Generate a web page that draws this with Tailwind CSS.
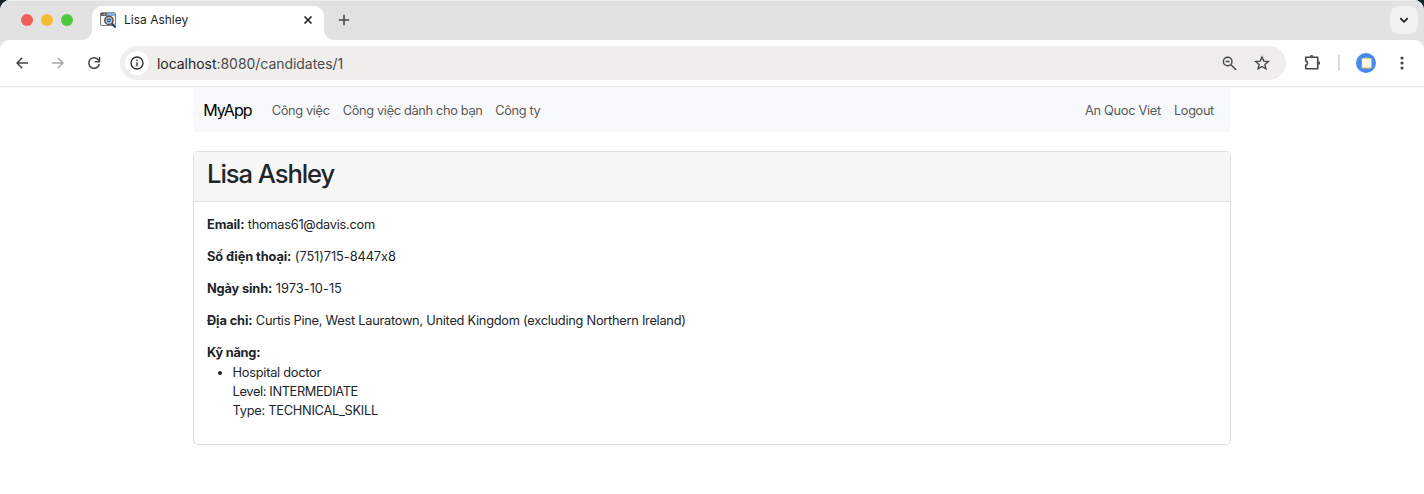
<!DOCTYPE html>
<html lang="vi">
<head>
<meta charset="utf-8">
<title>Lisa Ashley</title>
<script src="https://cdn.jsdelivr.net/npm/@tailwindcss/browser@4"></script>
</head>
<body class="bg-[#17232a] font-['Inter','Noto_Sans',sans-serif] text-[12.8px] leading-[19.2px] text-[#212529]">
<div class="flex h-[494px] w-[1424px] flex-col overflow-hidden rounded-t-[10px] bg-white whitespace-nowrap">
  <header class="shrink-0 bg-[#e2e2e2]">
    <div class="flex h-10 items-start border-t border-[#efefef]">
      <div class="flex w-[92px] gap-2 pt-[13px] pl-[21px]">
        <span class="size-3 rounded-full bg-[#ee5f57]"></span>
        <span class="size-3 rounded-full bg-[#f5bd2f]"></span>
        <span class="size-3 rounded-full bg-[#4bc93f]"></span>
      </div>
      <div class="relative mt-[5px] flex h-[34px] w-[232px] items-start rounded-t-[10px] bg-white pl-2">
        <svg class="absolute bottom-0 -left-[10px] size-[10px]" viewBox="0 0 10 10" fill="#fff"><path d="M10 0V10H0A10 10 0 0 0 10 0"/></svg>
        <svg class="absolute -right-[10px] bottom-0 size-[10px]" viewBox="0 0 10 10" fill="#fff"><path d="M0 0V10H10A10 10 0 0 1 0 0"/></svg>
        <svg class="mt-[6px] size-4" viewBox="0 0 16 16">
          <rect x=".5" y=".7" width="15" height="12.8" rx="1" fill="#f2f4f6" stroke="#555b63" stroke-width=".8"/>
          <path d="M.8 1h14.4v3H.8z" fill="#7bb2e8"/><path d="M.8 1h6v2.7h-6z" fill="#34506b"/>
          <circle cx="2.3" cy="2.4" r=".8" fill="#e35b4c"/><circle cx="4.3" cy="2.4" r=".8" fill="#e9b44c"/><circle cx="6.2" cy="2.4" r=".8" fill="#5aae64"/>
          <path d="M12 11.7l3 3" stroke="#29415c" stroke-width="2.3" stroke-linecap="round"/>
          <circle cx="8.9" cy="8.4" r="4.1" fill="#9fc3ea" stroke="#6b4a35" stroke-width="1.5"/>
          <path d="M6.8 7.3h4.2M7 9.4h3.8" stroke="#315f96" stroke-width="1.2"/>
        </svg>
        <span class="ml-2 mt-1 w-[179px] text-[12px] leading-5 text-[#1f1f1f]">Lisa Ashley</span>
        <svg class="mt-[9px] size-[10px]" viewBox="0 0 10 10" stroke="#1f1f1f" stroke-width="1.6"><path d="M1.5 1.5l7 7M8.5 1.5l-7 7"/></svg>
      </div>
      <svg class="ml-[14px] mt-[13px] size-3" viewBox="0 0 12 12" stroke="#444746" stroke-width="1.6"><path d="M6 .8v10.4M.8 6h10.4"/></svg>
      <div class="mt-[5px] mr-[6px] ml-auto flex size-7 items-center justify-center rounded-[9px] bg-[#f1f1f1]">
        <svg class="size-[10px]" viewBox="0 0 10 10" fill="none" stroke="#1f1f1f" stroke-width="1.8"><path d="M1.3 3.2L5 6.8l3.7-3.6"/></svg>
      </div>
    </div>
    <div class="flex h-[47px] items-start rounded-t-[9px] border-b border-[#dfe2e2] bg-white pt-[6px]">
      <svg class="mt-[11px] ml-4 size-3" viewBox="0 0 12 12" fill="none" stroke="#444746" stroke-width="1.5"><path d="M12 6H1M6.2.7L1 6l5.2 5.3"/></svg>
      <svg class="mt-[11px] ml-6 size-3" viewBox="0 0 12 12" fill="none" stroke="#a9a9a9" stroke-width="1.5"><path d="M0 6h11M5.8.7L11 6l-5.2 5.3"/></svg>
      <svg class="mt-[10px] ml-[23px] size-[14px]" viewBox="0 0 14 14" fill="none" stroke="#444746" stroke-width="1.5"><path d="M11.7 4.4A5.3 5.3 0 1 0 12.3 8M12.5 1v4.7H7.8"/></svg>
      <div class="ml-[19px] flex h-[34px] w-[1166px] items-center rounded-full bg-[#efeeec] pl-[5px]">
        <span class="flex size-6 items-center justify-center rounded-full bg-white">
          <svg class="size-[14px]" viewBox="0 0 14 14" fill="none" stroke="#303030" stroke-width="1.4"><circle cx="7" cy="7" r="6"/><path d="M7 6.2v4M7 3.6v1.4"/></svg>
        </span>
        <span class="ml-2 pt-px text-[14px] leading-5 tracking-[-0.04px] text-[#4b4b4b]"><span class="text-[#252525]">localhost</span>:8080/candidates/1</span>
        <svg class="mr-[17px] ml-auto size-[15px]" viewBox="0 0 15 15" fill="none" stroke="#444746" stroke-width="1.4"><circle cx="5.7" cy="5.5" r="4.3"/><path d="M8.9 8.7l5.3 5.3M3.8 5.5h3.8"/></svg>
        <svg class="mr-4 size-4" viewBox="0 0 16 16" fill="none" stroke="#444746" stroke-width="1.4"><path d="M8 2l1.8 4.1 4.5.4-3.4 2.9 1 4.4L8 11.5l-3.9 2.3 1-4.4L1.7 6.5l4.5-.4z"/></svg>
      </div>
      <svg class="mt-2 ml-[18px] size-[17px]" viewBox="0 0 17 17"><path d="M1.7 3.3h12v11.5h-12v-3.4a2.3 2.3 0 0 0 0-4.5z" fill="none" stroke="#444746" stroke-width="1.6" stroke-linejoin="round"/><path d="M5.8 2.8a1.9 1.9 0 0 1 3.8 0zM14.2 7.1a1.9 1.9 0 0 1 0 3.8z" fill="#444746"/></svg>
      <span class="mt-[9px] ml-[17px] h-4 w-[1.5px] bg-[#dcdcdc]"></span>
      <svg class="mt-[7px] ml-[16px] size-5" viewBox="0 0 20 20"><circle cx="10" cy="10" r="10" fill="#4788f5"/><rect x="5" y="5" width="11" height="10.5" rx="2" fill="#e7c83d"/><path d="M5 7v6l2 2V5z" fill="#6dbb68"/><rect x="6" y="5.5" width="9" height="9" rx="1.5" fill="#fff8e2"/><path d="M9 4.7h3" stroke="#6dcf63" stroke-width="1.2"/></svg>
      <svg class="mt-[10px] ml-6 h-[14px] w-1" viewBox="0 0 4 14" fill="#444746"><circle cx="2" cy="2" r="1.55"/><circle cx="2" cy="7" r="1.55"/><circle cx="2" cy="12" r="1.55"/></svg>
    </div>
  </header>
  <main class="mx-auto w-[1038px]">
    <nav class="mx-px flex h-[45px] items-center bg-[#f8f9fa] pt-[2px] pl-[9.2px] text-[#595a5b]">
      <a class="w-[68.5px] pb-px text-[16px] leading-6 tracking-[-0.9px] text-black">MyApp</a>
      <a class="w-[71px] tracking-[-0.35px]">Công việc</a>
      <a class="w-[152.5px] tracking-[-0.34px]">Công việc dành cho bạn</a>
      <a class="tracking-[-0.35px]">Công ty</a>
      <a class="ml-auto w-[89px] tracking-[-0.3px]">An Quoc Viet</a>
      <a class="w-[56px] tracking-[-0.38px]">Logout</a>
    </nav>
    <section class="mt-[19px] h-[294px] overflow-hidden rounded-[5px] border border-[#dfdfdf]">
      <div class="h-[50px] border-b border-[#dfdfdf] bg-[#f7f7f7] px-[13px] pt-[7.4px]">
        <h2 class="text-[25.6px] leading-[30.7px] font-medium tracking-[-1.07px]">Lisa Ashley</h2>
      </div>
      <div class="px-[13px] py-[12.8px] tracking-[-0.26px]">
        <p class="mb-[12.8px]"><strong class="tracking-[-0.12px]">Email:</strong> thomas61@davis.com</p>
        <p class="mb-[12.8px] tracking-[-0.08px]"><strong class="tracking-[-0.1px]">Số điện thoại:</strong> (751)715-8447x8</p>
        <p class="mb-[12.8px] tracking-[0.03px]"><strong class="tracking-[-0.15px]">Ngày sinh:</strong> 1973-10-15</p>
        <p class="mb-[12.8px]"><strong class="tracking-[-0.12px]">Địa chỉ:</strong> Curtis Pine, West Lauratown, United Kingdom (excluding Northern Ireland)</p>
        <strong class="tracking-[-0.25px]">Kỹ năng:</strong>
        <ul class="list-disc pt-[0.6px] pl-[25.6px]"><li>Hospital doctor<br><span class="tracking-[-0.36px]">Level: INTERMEDIATE</span><br>Type: TECHNICAL_SKILL</li></ul>
      </div>
    </section>
  </main>
</div>
</body>
</html>
